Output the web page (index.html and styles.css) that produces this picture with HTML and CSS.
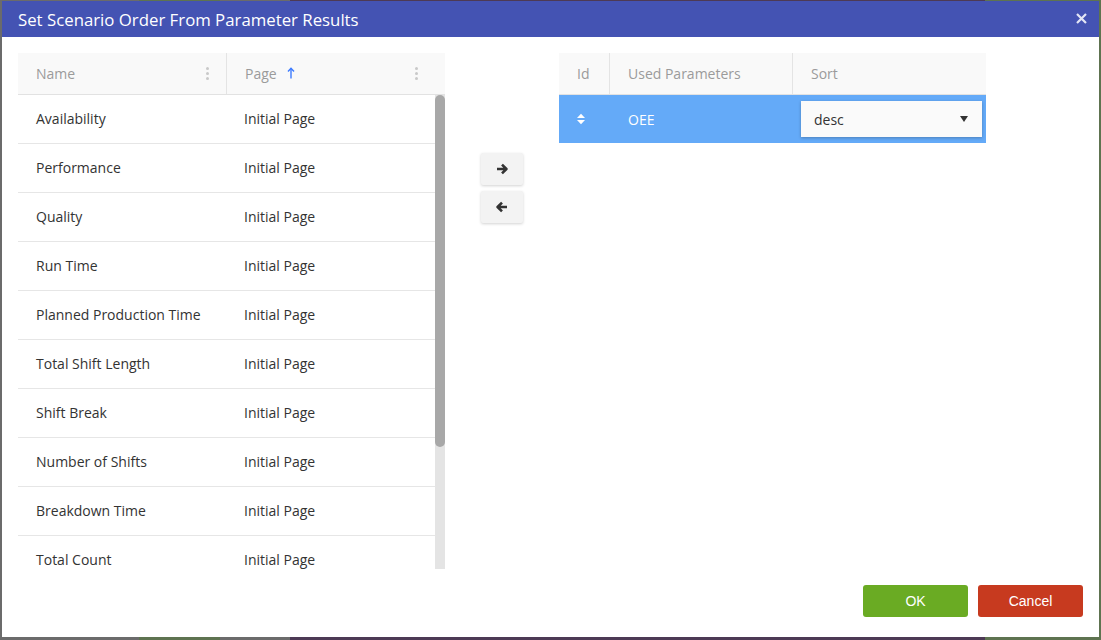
FILE: index.html
```html
<!DOCTYPE html>
<html>
<head>
<meta charset="utf-8">
<link rel="stylesheet" href="styles.css">
</head>
<body>
<div class="dialog">
  <div class="dlg-head">
    <span class="dlg-title">Set Scenario Order From Parameter Results</span>
    <svg class="dlg-close" width="11" height="11" viewBox="0 0 11 11"><path d="M1 1L10 10M10 1L1 10" stroke="#e3e6f5" stroke-width="2.2" fill="none"/></svg>
  </div>
  <div class="dlg-body">
    <div class="grid left-grid">
      <div class="grid-head">
        <div class="hcell name-col"><span>Name</span><span class="kebab"><i></i><i></i><i></i></span></div>
        <div class="hcell page-col"><span>Page</span>
          <svg class="sort-up" width="8" height="12" viewBox="0 0 8 12"><path d="M4 1.5V11.5" stroke="#3d7bff" stroke-width="1.4" fill="none"/><path d="M1 4.5L4 1.2L7 4.5" stroke="#3d7bff" stroke-width="1.4" fill="none"/></svg>
          <span class="grow"></span><span class="kebab"><i></i><i></i><i></i></span></div>
      </div>
      <div class="grid-body">
        <div class="rows">
          <div class="row"><div class="cell name-col">Availability</div><div class="cell">Initial Page</div></div>
          <div class="row"><div class="cell name-col">Performance</div><div class="cell">Initial Page</div></div>
          <div class="row"><div class="cell name-col">Quality</div><div class="cell">Initial Page</div></div>
          <div class="row"><div class="cell name-col">Run Time</div><div class="cell">Initial Page</div></div>
          <div class="row"><div class="cell name-col">Planned Production Time</div><div class="cell">Initial Page</div></div>
          <div class="row"><div class="cell name-col">Total Shift Length</div><div class="cell">Initial Page</div></div>
          <div class="row"><div class="cell name-col">Shift Break</div><div class="cell">Initial Page</div></div>
          <div class="row"><div class="cell name-col">Number of Shifts</div><div class="cell">Initial Page</div></div>
          <div class="row"><div class="cell name-col">Breakdown Time</div><div class="cell">Initial Page</div></div>
          <div class="row"><div class="cell name-col">Total Count</div><div class="cell">Initial Page</div></div>
        </div>
        <div class="vscroll"><div class="thumb"></div></div>
      </div>
    </div>

    <div class="movers">
      <button class="mv">
        <svg width="12" height="12" viewBox="0 0 12 12"><path d="M1 6H10M6 1.6L10.4 6L6 10.4" stroke="#333" stroke-width="2.6" fill="none" stroke-linejoin="round"/></svg>
      </button>
      <button class="mv">
        <svg width="12" height="12" viewBox="0 0 12 12"><path d="M11 6H2M6 1.6L1.6 6L6 10.4" stroke="#333" stroke-width="2.6" fill="none" stroke-linejoin="round"/></svg>
      </button>
    </div>

    <div class="grid right-grid">
      <div class="grid-head">
        <div class="hcell id-col">Id</div>
        <div class="hcell used-col">Used Parameters</div>
        <div class="hcell sort-col">Sort</div>
      </div>
      <div class="row sel">
        <div class="cell id-col">
          <svg width="10" height="12" viewBox="0 0 10 12"><path d="M1 5H9L5 0.8Z M1 7H9L5 11.2Z" fill="#fff"/></svg>
        </div>
        <div class="cell used-col">OEE</div>
        <div class="cell sort-col">
          <div class="select"><span>desc</span><span class="caret"></span></div>
        </div>
      </div>
    </div>
  </div>
  <div class="dlg-foot">
    <button class="btn ok">OK</button>
    <button class="btn cancel">Cancel</button>
  </div>
</div>
</body>
</html>
```

FILE: styles.css
```css
html, body { margin: 0; height: 100%; }
body {
  box-sizing: border-box;
  padding: 1px 2px 3px 2px;
  background: linear-gradient(90deg, #6b6b6b 0, #6b6b6b 139px, #5e7350 139px, #5e7350 220px, #6b6b6b 220px, #6b6b6b 290px, #4d3a55 290px, #4d3a55 985px, #5e7350 985px);
  font-family: "Open Sans", "Noto Sans", sans-serif;
  overflow: hidden;
}
.dialog {
  height: 636px;
  background: #fff;
  display: flex;
  flex-direction: column;
}
.dlg-head {
  height: 36px;
  background: #4453b3;
  color: #fff;
  display: flex;
  align-items: center;
  padding: 0 12px 0 16px;
  flex: none;
}
.dlg-title { font-size: 16.8px; flex: 1; }
.dlg-close { margin-top: -2px; }
.dlg-body {
  flex: 1;
  display: flex;
  align-items: flex-start;
  padding: 16px 16px 0 16px;
  gap: 36px;
  min-height: 0;
}
.grid { width: 427px; flex: none; font-size: 14px; color: #333; }
.grid-head {
  display: flex;
  height: 42px;
  background: #f9f9f9;
  border-bottom: 1px solid #e2e2e2;
  box-sizing: border-box;
  color: #9b9b9b;
}
.hcell {
  display: flex;
  align-items: center;
  padding: 0 18px;
  box-sizing: border-box;
  border-right: 1px solid #e4e4e4;
}
.hcell:last-child { border-right: none; }
.left-grid .name-col { width: 208px; }
.left-grid .hcell.name-col { width: 209px; justify-content: space-between; padding-right: 17px; }
.left-grid .page-col { flex: 1; padding-right: 27px; }
.grow { flex: 1; }
.sort-up { margin-left: 10px; margin-top: -2px; }
.kebab { display: flex; flex-direction: column; gap: 2px; }
.kebab i { display: block; width: 3px; height: 3px; border-radius: 50%; background: #c9c9c9; }
.grid-body {
  display: flex;
  height: 474px;
}
.rows { flex: 1; overflow: hidden; }
.vscroll {
  width: 10px;
  background: #e4e4e4;
  flex: none;
}
.thumb {
  height: 352px;
  background: #a8a8a8;
  border-radius: 5px;
}
.row {
  display: flex;
  height: 49px;
  border-bottom: 1px solid #e6e6e6;
  box-sizing: border-box;
  flex: none;
}
.rows .row { padding-bottom: 1px; }
.cell {
  display: flex;
  align-items: center;
  padding: 0 18px;
  box-sizing: border-box;
}
.movers {
  display: flex;
  flex-direction: column;
  gap: 6px;
  margin-top: 100px;
  flex: none;
}
.mv {
  width: 42px;
  height: 32px;
  border: none;
  border-radius: 2px;
  background: #f3f3f3;
  box-shadow: 0 1px 3px rgba(0,0,0,0.18);
  display: flex;
  align-items: center;
  justify-content: center;
  padding: 0;
}
.right-grid .id-col { width: 51px; padding-left: 18px; }
.right-grid .used-col { width: 183px; }
.right-grid .sort-col { flex: 1; }
.row.sel {
  background: #64aaf8;
  color: #fff;
  border-bottom: none;
  height: 48px;
}
.row.sel .id-col { padding-left: 17px; }
.row.sel .sort-col { padding: 0 4px 0 8px; }
.select {
  flex: 1;
  height: 36px;
  background: #fafafa;
  box-shadow: 0 1px 3px rgba(0,0,0,0.25);
  display: flex;
  align-items: center;
  justify-content: space-between;
  padding: 0 14px 0 13px;
  color: #333;
  font-size: 14px;
}
.caret {
  width: 0; height: 0;
  border-left: 4px solid transparent;
  border-right: 4px solid transparent;
  border-top: 6px solid #333;
}
.dlg-foot {
  display: flex;
  justify-content: flex-end;
  gap: 10px;
  padding: 0 16px 20px 0;
  flex: none;
}
.btn {
  width: 105px;
  height: 32px;
  border: none;
  border-radius: 3px;
  color: #fff;
  font-family: "Liberation Sans", Arial, sans-serif;
  font-size: 14px;
}
.btn.ok { background: #6aab23; }
.btn.cancel { background: #c73a1f; }
```
